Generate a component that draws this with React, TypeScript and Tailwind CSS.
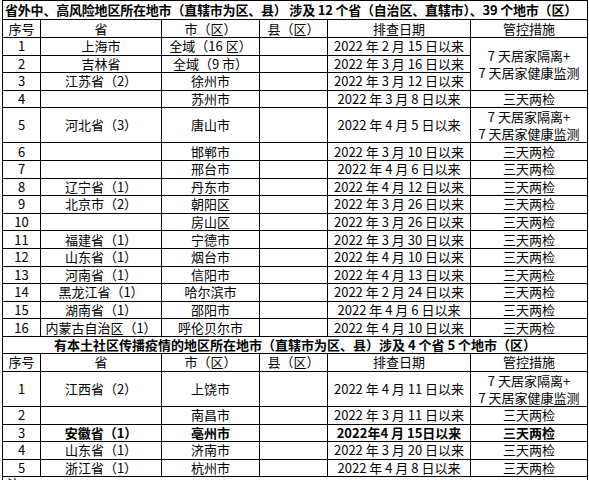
import React from "react";

type Row = {
  no: string;
  prov: string;
  city: string;
  date: string;
  measure?: string | null; // null = covered by rowspan
  span?: number;
  tall?: boolean;
  bold?: boolean;
};

const QUARANTINE = (
  <>
    7 天居家隔离+
    <br />7 天居家健康监测
  </>
);

const outside: Row[] = [
  { no: "1", prov: "上海市", city: "全域（16 区）", date: "2022 年 2 月 15 日以来", measure: "q", span: 3 },
  { no: "2", prov: "吉林省", city: "全域（9 市）", date: "2022 年 3 月 16 日以来", measure: null },
  { no: "3", prov: "江苏省（2）", city: "徐州市", date: "2022 年 3 月 12 日以来", measure: null },
  { no: "4", prov: "", city: "苏州市", date: "2022 年 3 月 8 日以来", measure: "三天两检" },
  { no: "5", prov: "河北省（3）", city: "唐山市", date: "2022 年 4 月 5 日以来", measure: "q", tall: true },
  { no: "6", prov: "", city: "邯郸市", date: "2022 年 3 月 10 日以来", measure: "三天两检" },
  { no: "7", prov: "", city: "邢台市", date: "2022 年 4 月 6 日以来", measure: "三天两检" },
  { no: "8", prov: "辽宁省（1）", city: "丹东市", date: "2022 年 4 月 12 日以来", measure: "三天两检" },
  { no: "9", prov: "北京市（2）", city: "朝阳区", date: "2022 年 3 月 26 日以来", measure: "三天两检" },
  { no: "10", prov: "", city: "房山区", date: "2022 年 3 月 26 日以来", measure: "三天两检" },
  { no: "11", prov: "福建省（1）", city: "宁德市", date: "2022 年 3 月 30 日以来", measure: "三天两检" },
  { no: "12", prov: "山东省（1）", city: "烟台市", date: "2022 年 4 月 10 日以来", measure: "三天两检" },
  { no: "13", prov: "河南省（1）", city: "信阳市", date: "2022 年 4 月 13 日以来", measure: "三天两检" },
  { no: "14", prov: "黑龙江省（1）", city: "哈尔滨市", date: "2022 年 2 月 24 日以来", measure: "三天两检" },
  { no: "15", prov: "湖南省（1）", city: "邵阳市", date: "2022 年 4 月 6 日以来", measure: "三天两检" },
  { no: "16", prov: "内蒙古自治区（1）", city: "呼伦贝尔市", date: "2022 年 4 月 10 日以来", measure: "三天两检" },
];

const local: Row[] = [
  { no: "1", prov: "江西省（2）", city: "上饶市", date: "2022 年 4 月 11 日以来", measure: "q", tall: true },
  { no: "2", prov: "", city: "南昌市", date: "2022 年 3 月 11 日以来", measure: "三天两检" },
  { no: "3", prov: "安徽省（1）", city: "亳州市", date: "2022年4 月 15日以来", measure: "三天两检", bold: true },
  { no: "4", prov: "山东省（1）", city: "济南市", date: "2022 年 3 月 20 日以来", measure: "三天两检" },
  { no: "5", prov: "浙江省（1）", city: "杭州市", date: "2022 年 4 月 8 日以来", measure: "三天两检" },
];

const cell = "border border-black p-0 text-center align-middle whitespace-nowrap";

function HeaderRow({ h }: { h: string }) {
  return (
    <tr className={h}>
      <td className={cell}>序号</td>
      <td className={cell}>省</td>
      <td className={cell}>市（区）</td>
      <td className={cell}>县（区）</td>
      <td className={cell}>排查日期</td>
      <td className={cell}>管控措施</td>
    </tr>
  );
}

function DataRow({ r }: { r: Row }) {
  const weight = r.bold ? " font-bold" : "";
  return (
    <tr className={r.tall ? "h-[35px]" : "h-[17.6px]"}>
      <td className={cell}>{r.no}</td>
      <td className={cell + weight}>{r.prov}</td>
      <td className={cell + weight}>{r.city}</td>
      <td className={cell}></td>
      <td className={cell + weight}>{r.date}</td>
      {r.measure !== null && (
        <td
          className={cell + weight + (r.measure === "q" ? " leading-[17px]" : "")}
          rowSpan={r.span ?? 1}
        >
          {r.measure === "q" ? QUARANTINE : r.measure}
        </td>
      )}
    </tr>
  );
}

export default function App() {
  return (
    <div
      className="bg-white text-black px-[2px] h-[480px] overflow-hidden"
      style={{ fontFamily: '"Noto Sans CJK SC", "Noto Sans", sans-serif' }}
    >
      <table className="table-fixed border-collapse w-[585px] text-[13px] leading-[14px]">
        <colgroup>
          <col className="w-[38px]" />
          <col className="w-[121px]" />
          <col className="w-[98px]" />
          <col className="w-[68px]" />
          <col className="w-[143px]" />
          <col className="w-[117px]" />
        </colgroup>
        <tbody>
          <tr className="h-[19px]">
            <td colSpan={6} className={cell + " font-bold text-left pl-[2px] tracking-[-0.2px]"}>
              省外中、高风险地区所在地市（直辖市为区、县） 涉及 12 个省（自治区、直辖市）、39 个地市（区）
            </td>
          </tr>
          <HeaderRow h="h-[18px]" />
          {outside.map((r) => (
            <DataRow key={"o" + r.no} r={r} />
          ))}
          <tr className="h-[16.7px]">
            <td colSpan={6} className={cell + " font-bold"}>
              有本土社区传播疫情的地区所在地市（直辖市为区、县）涉及 4 个省 5 个地市（区）
            </td>
          </tr>
          <HeaderRow h="h-[18.4px]" />
          {local.map((r) => (
            <DataRow key={"l" + r.no} r={r} />
          ))}
          <tr className="h-[18px]">
            <td colSpan={6} className={cell + " text-left pl-[4px] align-top"}>
              注：
            </td>
          </tr>
        </tbody>
      </table>
    </div>
  );
}
